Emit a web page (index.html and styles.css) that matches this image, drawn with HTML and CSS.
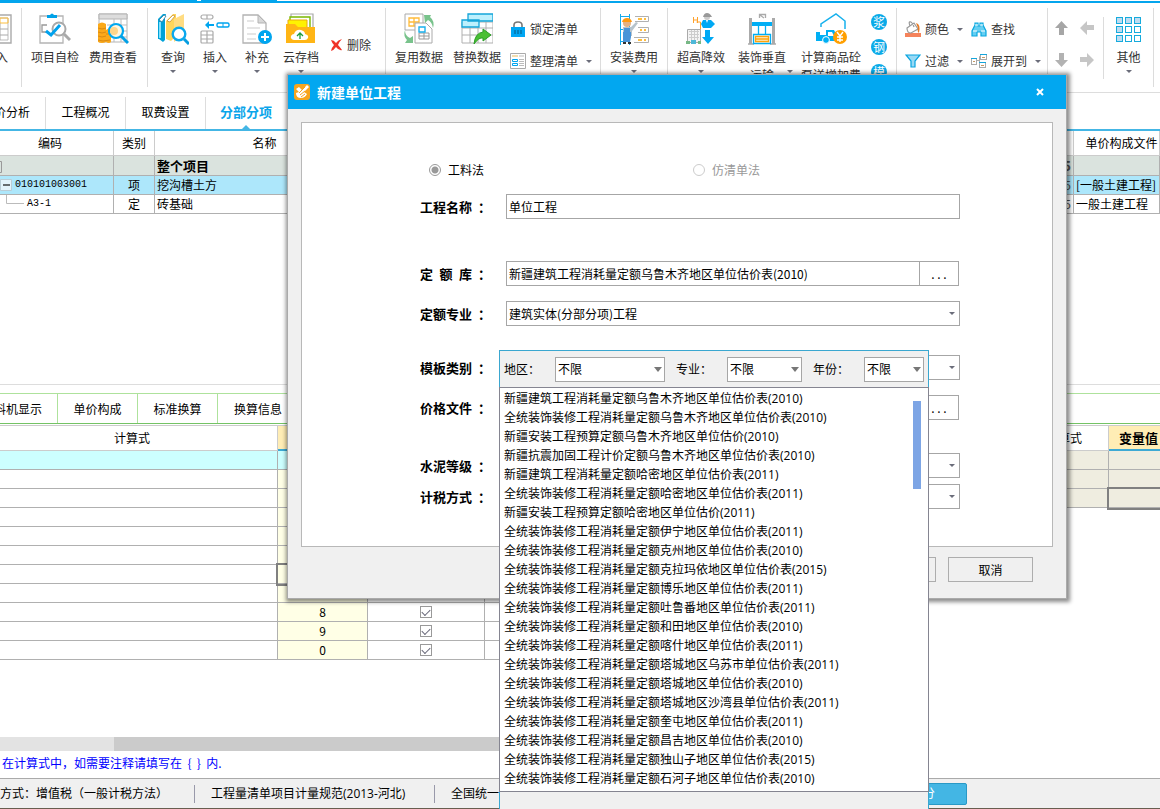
FILE: index.html
```html
<!DOCTYPE html>
<html lang="zh-CN">
<head>
<meta charset="utf-8">
<title>新建单位工程</title>
<link rel="stylesheet" href="styles.css">
</head>
<body>
<div class="app">
  <div class="topbar"><span class="topbar-left"></span><span class="topbar-notch"></span><span class="topbar-mid"></span></div>
  <header class="ribbon">
    <div class="group g-import">
      <button class="tool"><svg width="32" height="32" viewBox="0 0 32 32"><path d="M2 2h29v28H2z" fill="#fff" stroke="#aaa" stroke-width="1.4"/><path d="M5 5h23v22H5z" fill="#fff" stroke="#bbb"/><path d="M5 5h23v5H5zM20 5v5" fill="none" stroke="#fdbe3c"/><path d="M5 16h23M5 22h23M12 10v17M20 10v17" stroke="#aaa"/></svg><span>导入</span></button>
    </div>
    <div class="group g-check">
      <button class="tool"><svg width="32" height="32" viewBox="0 0 32 32"><path d="M1 3h23v27H1z" fill="#fff" stroke="#b4b4b4" stroke-width="1.3"/><path d="M8 2h3q2-3 4 0h3v3H8z" fill="#00a2e8"/><path d="M8 12H3v7h5" fill="none" stroke="#999" stroke-width="1.3"/><circle cx="20" cy="16" r="6.5" fill="#fff" stroke="#a9a9a9" stroke-width="2"/><path d="M25 21l6 6" stroke="#a9a9a9" stroke-width="3"/><path d="M7 18l5 4 9-10" fill="none" stroke="#00a2ee" stroke-width="3"/></svg><span>项目自检</span></button>
      <button class="tool"><svg width="32" height="32" viewBox="0 0 32 32"><path d="M2 1h28v28H2z" fill="#fff" stroke="#b4b4b4"/><path d="M2 1h28v5H2z" fill="#ddd" stroke="#b4b4b4"/><path d="M10 12h20M10 18h20M10 24h20M17 6v23M24 6v23" stroke="#bbb"/><path d="M1 11q4-3 8 0v18q-4 2-8 0zM9 17q4-3 5 0v12q-2 2-5 0z" fill="#fba919"/><path d="M1 15q4 2 8 0M1 19q4 2 8 0M1 23q4 2 8 0M1 27q4 2 12 0M9 21h5" fill="none" stroke="#d98a14"/><circle cx="19" cy="18" r="7" fill="#fff6df" stroke="#00a8f0" stroke-width="2.2"/><circle cx="17" cy="18" r="4" fill="#ffd68a"/><path d="M24 23l7 7" stroke="#00a0e6" stroke-width="3"/></svg><span>费用查看</span></button>
    </div>
    <div class="group g-query">
      <button class="tool"><svg width="32" height="32" viewBox="0 0 32 32"><path d="M1 6l5-5h3L8 4v23l-2 2-4-3H1z" fill="#00a2d8"/><path d="M2 7l5-5 2 1-4 6z" fill="#fff" stroke="#2b7fa0" stroke-width=".8"/><path d="M3 9v16" stroke="#7fe0ff" stroke-width="2"/><path d="M9 8l7-7h3v22l-5 5-5-2z" fill="#ffd65a"/><path d="M10 8l6-6 2 1-5 6z" fill="#fff" stroke="#c9912e" stroke-width=".8"/><path d="M17 6l10-5v21l-10 7z" fill="#ffdc82"/><circle cx="22" cy="21" r="6.3" fill="#fff" stroke="#0aa8ed" stroke-width="2.4"/><path d="M27 26l5 5" stroke="#079ee0" stroke-width="3"/></svg><span>查询</span><i class="arrow"></i></button>
      <button class="tool"><svg width="32" height="32" viewBox="0 0 32 32"><g fill="#fff" stroke="#aaa" stroke-width="1.2"><rect x="2" y="2" width="12" height="4" rx="2"/><rect x="2" y="18" width="12" height="12" rx="1"/><path d="M8 2v4M8 18v12M2 22h12M2 26h12"/></g><path d="M6 12l4-4v3h5v2h-5v3z" fill="#00a5ef"/><rect x="18" y="10" width="12" height="4" rx="1.5" fill="#fff" stroke="#00a5ef" stroke-width="1.4"/><path d="M24 10v4" stroke="#00a5ef"/></svg><span>插入</span><i class="arrow"></i></button>
      <button class="tool"><svg width="32" height="32" viewBox="0 0 32 32"><path d="M2 2h15l8 8v20H2z" fill="#fff" stroke="#b3b3b3" stroke-width="1.3"/><path d="M17 2v8h8z" fill="#d8d8d8" stroke="#b3b3b3"/><path d="M6 8h7M6 15h13M6 21h9M6 26h9" stroke="#ddd" stroke-width="1.5"/><circle cx="24" cy="24" r="7" fill="#00a5ef"/><path d="M24 20v8M20 24h8" stroke="#fff" stroke-width="2"/></svg><span>补充</span><i class="arrow"></i></button>
      <button class="tool wide"><svg width="32" height="32" viewBox="0 0 32 32"><path d="M6 1h22v18H6z" fill="#fff" stroke="#aaa" stroke-width="1.2"/><path d="M5 4h20v14H5z" fill="#fff" stroke="#7ab800" stroke-width="1.4"/><path d="M3 7h19v10H3z" fill="#fff200" stroke="#e9a90e"/><path d="M1 11h9l3 3h17v16H1z" fill="#ffb515"/><path d="M9 27q-4-1-3-4 1-2 3-2 2-5 7-4 4 1 4 4 4 1 3 4-1 2-3 2z" fill="#fff"/><path d="M15 26v-5m-3 2l3-3 3 3" fill="none" stroke="#1c9b3c" stroke-width="1.3"/></svg><span>云存档</span><i class="arrow"></i></button>
      <button class="mini"><svg width="13" height="13" viewBox="0 0 13 13"><path d="M1 1q3 0 5 3 2-3 6-4-3 3-4 6 2 2 4 5-3 1-6-3-2 3-5 4 1-4 3-6-2-2-3-5z" fill="#ef3327"/></svg><span>删除</span></button>
    </div>
    <div class="group g-reuse">
      <button class="tool"><svg width="32" height="32" viewBox="0 0 32 32"><path d="M2 1h18v16H2z" fill="#fff" stroke="#aaa"/><path d="M6 5h10v8H6zM6 9h10M11 5v8" fill="none" stroke="#ffbc3b" stroke-width="1.3"/><path d="M12 10h11l6 6v14H12z" fill="#fff" stroke="#aaa"/><path d="M16 20h10v6H16zM16 23h10M21 20v6" fill="none" stroke="#999"/><path d="M16 14h6v5h-6z" fill="#fff" stroke="#19b0ed" stroke-width="1.4"/><path d="M21 2l7 0-1 2q5 4 3 11-1-6-5-8l-3 3zM2 17q0 6 5 8l3-2v7H2l2-3q-4-4-2-10z" fill="#79c38c"/></svg><span>复用数据</span></button>
      <button class="tool"><svg width="32" height="32" viewBox="0 0 32 32"><path d="M1 9h31v21H1zM1 15h31M1 22h31M9 9v21M17 9v21M25 9v21" fill="#fff" stroke="#b0b0b0"/><path d="M7 1h25v7H7zM1 7h17v7H1z" fill="#bdf0fd" stroke="#15a5d9" stroke-width="1.3"/><path d="M13 31q1-11 9-12v-3l8 6-8 6v-3q-4-1-9 6z" fill="#4abf34" stroke="#2d9f29"/></svg><span>替换数据</span></button>
      <div class="stack">
        <button class="mini"><svg width="16" height="16" viewBox="0 0 16 16"><path d="M4 7V4q0-3 4-3t4 3v3" fill="none" stroke="#777" stroke-width="1.6"/><path d="M1 6h14v10H1z" fill="#00a6f3"/><path d="M4 10h2m1 0h2m1 0h2M4 12h2m1 0h2m1 0h2" stroke="#075a83"/></svg><span>锁定清单</span></button>
        <button class="mini"><svg width="16" height="16" viewBox="0 0 16 16"><path d="M.5.5h15v15H.5z" fill="#fff" stroke="#aaa"/><path d="M2 2h6v2H2z" fill="#f3ddae"/><path d="M9 2h5v2H9z" fill="#ddd"/><path d="M2.500 6.500h5v2h-5zM2.500 10.500h5v2h-5z" fill="#fff" stroke="#00a5ef"/><path d="M9 6.500h5M9 8.500h5M9 10.500h5M9 12.500h5" stroke="#bbb"/></svg><span>整理清单</span><i class="arrow"></i></button>
      </div>
    </div>
    <div class="group g-install">
      <button class="tool"><svg width="32" height="32" viewBox="0 0 32 32"><path d="M2.500 1v31M11.500 1v31M2 3.500h9M2 16.500h5M2 28.500h9" stroke="#15abed"/><path d="M17 3.500h13.500v5H17M20 14.500h10.500v5H20M16 24.500h14.500v5H16" fill="#fff" stroke="#b1b1b1"/><path d="M20 6h4m2 0h2M22 17h2m2 0h2M20 27h4m2 0h2" stroke="#ffa900" stroke-width="1.400"/><circle cx="9" cy="10" r="4" fill="#e3b184"/><path d="M4 9q1-4 5-4t5 4z" fill="#ff9a10"/><path d="M5 14h8l5-5 2 1-6 8v5H5z" fill="#b6c3cc"/><path d="M6 15h6v8h-1v6H8v-6l-2-1zM5 19h8v5l-1 5H9v-4l-1 4H5z" fill="#4a94d8"/><path d="M5 29h3v2H5zm5 0h3v2h-3z" fill="#333"/></svg><span>安装费用</span><i class="arrow"></i></button>
    </div>
    <div class="group g-price">
      <button class="tool"><svg width="32" height="32" viewBox="0 0 32 32"><path d="M8.500 4v6m0-3h4m0-3v6m-1-1h4v21" fill="none" stroke="#ffa12b"/><path d="M2.500 16.500h13v13h-13z" fill="#f4f4f4" stroke="#aaa"/><path d="M4 18.500h10M4 21.500h10M4 24.500h10M6.500 17v10M9.500 17v10M12.500 17v10" stroke="#ccc"/><path d="M1 28h4v3H1zm12 0h3v3h-3z" fill="#77b885"/><path d="M6 27h5v4H6z" fill="#4db8d8"/><path d="M18 4q1-4 4-4t5 4z" fill="#999"/><path d="M19 4h6q0 3-3 3t-3-3z" fill="#ccc"/><path d="M18 7h3l1 3 1-3h3l4 4-4 4H18l-2-4zM20 17h5v7h4l-6 7-6-7h3z" fill="#00a9f4"/></svg><span>超高降效</span><i class="arrow"></i></button>
      <button class="tool t64"><svg width="32" height="32" viewBox="0 0 32 32"><path d="M4.500 5v26M27.500 5v26" stroke="#aaa" stroke-width="3"/><path d="M2 31h6m16 0h6M13.500 5V1.500h6V5M14 2l4 3" fill="none" stroke="#aaa" stroke-width="1.300"/><path d="M6 9h20v4H6z" fill="#00aef5"/><path d="M12.500 12v9m7-9v9M7.500 21.500h17v9h-17z" fill="none" stroke="#00aef5" stroke-width="1.300"/><path d="M9.500 23.500h13v5h-13zM10 26h12" fill="#fff3d7" stroke="#ffa40c" stroke-width="1.400"/></svg><span>装饰垂直<br>运输</span><i class="arrow side"></i></button>
      <button class="tool t74"><svg width="32" height="32" viewBox="0 0 32 32"><path d="M6 14v-3L21 1l9 7v8" fill="none" stroke="#17b1ed" stroke-width="1.500"/><path d="M1 19h4v3h6v-5h8l3 6v5H1z" fill="#00aff4"/><path d="M13 19h4l2 4h-6z" fill="#fff"/><circle cx="11" cy="27" r="3.400" fill="#00aff4" stroke="#fff"/><circle cx="25" cy="24" r="7" fill="#ff9f00"/><path d="M22 19l3 4 3-4M25 23v6M22 24h6M22 27h6" fill="none" stroke="#fff" stroke-width="1.400"/></svg><span>计算商品砼<br>泵送增加费</span></button>
      <div class="rounds"><button>浆</button><button>钢</button><button>模</button></div>
    </div>
    <div class="group g-edit">
      <div class="stack">
        <button class="mini"><svg width="16" height="16" viewBox="0 0 16 16"><path d="M0 12h16v4H0z" fill="#f5835b"/><path d="M2 7l7-5 4 6-7 4q-4 0-4-5zM5 5q-2-5 1-4 2 1 3 5" fill="#fff" stroke="#999" stroke-width="1.200"/><path d="M11 2q5 1 3 10-2-1-1-5z" fill="#e77a25"/></svg><span>颜色</span><i class="arrow"></i></button>
        <button class="mini"><svg width="16" height="16" viewBox="0 0 16 16"><path d="M1 2h14L10 8v6H6V8z" fill="#98d9f5" stroke="#07a4df" stroke-width="1.200"/></svg><span>过滤</span><i class="arrow"></i></button>
      </div>
      <div class="stack find">
        <button class="mini"><svg width="16" height="16" viewBox="0 0 16 16"><path d="M1 15v-5l3-6V2h3v3h2V2h3v2l3 6v5h-5v-4H6v4z" fill="#65cff2" stroke="#0aa8df" stroke-width="1.200"/><path d="M4 4h3m2 0h3M2 10h4m4 0h4" stroke="#fff"/></svg><span>查找</span></button>
        <button class="mini"><svg width="16" height="16" viewBox="0 0 16 16"><path d="M5 7.500h3.500m1-4h-1v8h1" stroke="#aaa" fill="none"/><g fill="#fff" stroke="#aaa"><rect x=".5" y="5.500" width="5" height="6"/><rect x="9.500" y="1.500" width="6" height="5"/><rect x="8.500" y="9.500" width="6" height="5"/></g><path d="M0 5.500h6M9 1.500h7M8 9.500h7" stroke="#14a6dc"/><path d="M2 8.500h2m7-4h3m-4 8h3" stroke="#c79a65"/></svg><span>展开到</span><i class="arrow"></i></button>
      </div>
    </div>
    <div class="group g-move">
      <button aria-label="上移"><svg width="15" height="16" viewBox="0 0 15 16"><path d="M7.500 1L14 8h-4v7H5V8H1z" fill="#a6a6a6"/></svg></button>
      <button aria-label="左移"><svg width="16" height="16" viewBox="0 0 16 16"><path d="M1 8L8 1v4h7v5H8v5z" fill="#c6c6c6"/></svg></button>
      <button aria-label="下移"><svg width="15" height="16" viewBox="0 0 15 16"><path d="M7.500 15L1 8h4V1h5v7h4z" fill="#b2b2b2"/></svg></button>
      <button aria-label="右移"><svg width="16" height="16" viewBox="0 0 16 16"><path d="M15 8L8 1v4H1v5h7v5z" fill="#c6c6c6"/></svg></button>
    </div>
    <div class="group g-other">
      <button class="tool"><svg width="32" height="32" viewBox="0 0 32 32"><g fill="#fff" stroke="#16abdd"><rect x="3.500" y="4.500" width="6" height="6" fill="#bfdcf1"/><rect x="12.500" y="4.500" width="6" height="6" fill="#bfdcf1"/><rect x="21.500" y="4.500" width="6" height="6" fill="#bfdcf1"/><rect x="3.500" y="13.500" width="6" height="6" fill="#bfdcf1"/><rect x="12.500" y="13.500" width="6" height="6"/><rect x="21.500" y="13.500" width="6" height="6"/><rect x="3.500" y="22.500" width="6" height="6" fill="#bfdcf1"/><rect x="12.500" y="22.500" width="6" height="6"/><rect x="21.500" y="22.500" width="6" height="6"/></g></svg><span>其他</span><i class="arrow"></i></button>
    </div>
  </header>

  <nav class="tabs">
    <a href="#" class="first">单价分析</a><a href="#">工程概况</a><a href="#">取费设置</a><a href="#" class="active">分部分项</a>
  </nav>

  <section class="project">
    <table class="grid">
      <colgroup><col class="c-code"><col class="c-kind"><col class="c-name"><col><col class="c-file"></colgroup>
      <thead><tr><th class="shift">编码</th><th>类别</th><th>名称</th><th></th><th class="file">单价构成文件</th></tr></thead>
      <tbody>
        <tr class="root"><td class="tree"><div><svg width="12" height="18"><path d="M0 4.500h1.500v11H0" fill="none" stroke="#999"/></svg></div></td><td></td><td>整个项目</td><td class="num">5</td><td></td></tr>
        <tr class="current"><td class="tree"><div><svg width="12" height="18"><path d="M.5 3.500h11v11H.5z" fill="#e3f3fb" stroke="#b9cdd6"/><path d="M3 9h7" stroke="#222" stroke-width="1.300"/></svg><span class="code">010101003001</span></div></td><td class="mid">项</td><td>挖沟槽土方</td><td class="num">5</td><td>[一般土建工程]</td></tr>
        <tr><td class="tree"><div><svg width="24" height="18"><path d="M6.500 0v8.500H24" fill="none" stroke="#bbb"/></svg><span class="code">A3-1</span></div></td><td class="mid">定</td><td>砖基础</td><td class="num">5</td><td>一般土建工程</td></tr>
      </tbody>
    </table>
  </section>

  <nav class="subtabs">
    <a href="#" class="first">工料机显示</a><a href="#">单价构成</a><a href="#">标准换算</a><a href="#">换算信息</a>
  </nav>

  <section class="lower">
    <div class="calc">
      <table class="grid calc-table">
        <colgroup><col class="c-expr"><col class="c-no"><col class="c-use"><col></colgroup>
        <thead><tr><th class="shift">计算式</th><th class="hot"></th><th></th><th></th></tr></thead>
        <tbody>
          <tr class="first-row"><td></td><td></td><td></td><td></td></tr>
          <tr><td></td><td></td><td></td><td></td></tr>
          <tr><td></td><td></td><td></td><td></td></tr>
          <tr><td></td><td></td><td></td><td></td></tr>
          <tr><td></td><td></td><td></td><td></td></tr>
          <tr><td></td><td></td><td></td><td></td></tr>
          <tr><td></td><td class="focus"></td><td></td><td></td></tr>
          <tr><td></td><td></td><td></td><td></td></tr>
          <tr><td></td><td>8</td><td><input type="checkbox" aria-label="8" checked></td><td></td></tr>
          <tr><td></td><td>9</td><td><input type="checkbox" aria-label="9" checked></td><td></td></tr>
          <tr><td></td><td>0</td><td><input type="checkbox" aria-label="0" checked></td><td></td></tr>
        </tbody>
      </table>
      <div class="hscroll"><div class="thumb"></div></div>
    </div>
    <div class="vars">
      <table class="grid vars-table">
        <colgroup><col><col class="c-var"></colgroup>
        <thead><tr><th class="formula">计算式</th><th class="hot">变量值</th></tr></thead>
        <tbody><tr><td></td><td></td></tr><tr><td></td><td></td></tr><tr><td></td><td class="focus"></td></tr></tbody>
      </table>
    </div>
  </section>
  <p class="hint">在计算式中，如需要注释请填写在 &nbsp;{ &nbsp;} &nbsp;内.</p>
  <footer class="status">
    <span class="s1">方式：增值税（一般计税方法）</span><span class="s2">工程量清单项目计量规范(2013-河北)</span><span class="s3">全国统一</span>
    <button>云评分</button>
  </footer>
</div>

<div class="dialog" role="dialog" aria-label="新建单位工程">
  <div class="titlebar">
    <svg width="16" height="16" viewBox="0 0 16 16"><rect width="16" height="16" rx="3" fill="#f7a51d"/><path d="M2 5l3-2 3 3 5-5 2 2-5 5 3 2q-2 4-6 4-5 0-5-5l3-1z" fill="#fff"/><path d="M5 9l6-6M6 11l5-4M7 13l4-3" stroke="#f7a51d"/></svg>
    <h1>新建单位工程</h1>
    <button aria-label="关闭"><svg width="8" height="8" viewBox="0 0 8 8"><path d="M1 1l6 6M7 1L1 7" stroke="#fff" stroke-width="2"/></svg></button>
  </div>
  <form class="panel">
    <div class="radios">
      <label><input type="radio" name="method" checked>工料法</label>
      <label class="off"><input type="radio" name="method" disabled>仿清单法</label>
    </div>
    <div class="row"><label for="f1"><span>工程名称</span>：</label><input id="f1" type="text" value="单位工程"></div>
    <div class="row gap-l"><label for="f2"><span>定 额 库</span>：</label><div class="pick"><input id="f2" type="text" value="新疆建筑工程消耗量定额乌鲁木齐地区单位估价表(2010)"><button type="button">. . .</button></div></div>
    <div class="row gap-s"><label for="f3"><span>定额专业</span>：</label><div class="combo"><select id="f3"><option>建筑实体(分部分项)工程</option></select></div></div>
    <div class="row gap-m"><label for="f4"><span>模板类别</span>：</label><div class="combo"><select id="f4"><option></option></select></div></div>
    <div class="row gap-s"><label for="f5"><span>价格文件</span>：</label><div class="pick"><input id="f5" type="text"><button type="button">. . .</button></div></div>
    <div class="row gap-n"><label for="f6"><span>水泥等级</span>：</label><div class="combo"><select id="f6"><option></option></select></div></div>
    <div class="row gap-t"><label for="f7"><span>计税方式</span>：</label><div class="combo"><select id="f7"><option></option></select></div></div>
  </form>
  <div class="actions"><button>确定</button><button>取消</button></div>
</div>

<div class="popup">
  <div class="filters">
    <label for="p1">地区：</label><div class="combo w-l"><select id="p1"><option>不限</option></select></div>
    <label for="p2">专业：</label><div class="combo w-m"><select id="p2"><option>不限</option></select></div>
    <label for="p3">年份：</label><div class="combo w-s"><select id="p3"><option>不限</option></select></div>
  </div>
  <div class="list">
    <ul>
      <li>新疆建筑工程消耗量定额乌鲁木齐地区单位估价表(2010)</li>
      <li>全统装饰装修工程消耗量定额乌鲁木齐地区单位估价表(2010)</li>
      <li>新疆安装工程预算定额乌鲁木齐地区单位估价(2010)</li>
      <li>新疆抗震加固工程计价定额乌鲁木齐地区单位估价表(2010)</li>
      <li>新疆建筑工程消耗量定额哈密地区单位估价表(2011)</li>
      <li>全统装饰装修工程消耗量定额哈密地区单位估价表(2011)</li>
      <li>新疆安装工程预算定额哈密地区单位估价(2011)</li>
      <li>全统装饰装修工程消耗量定额伊宁地区单位估价表(2011)</li>
      <li>全统装饰装修工程消耗量定额克州地区单位估价表(2010)</li>
      <li>全统装饰装修工程消耗量定额克拉玛依地区单位估价表(2015)</li>
      <li>全统装饰装修工程消耗量定额博乐地区单位估价表(2011)</li>
      <li>全统装饰装修工程消耗量定额吐鲁番地区单位估价表(2011)</li>
      <li>全统装饰装修工程消耗量定额和田地区单位估价表(2010)</li>
      <li>全统装饰装修工程消耗量定额喀什地区单位估价表(2011)</li>
      <li>全统装饰装修工程消耗量定额塔城地区乌苏市单位估价表(2011)</li>
      <li>全统装饰装修工程消耗量定额塔城地区单位估价表(2010)</li>
      <li>全统装饰装修工程消耗量定额塔城地区沙湾县单位估价表(2011)</li>
      <li>全统装饰装修工程消耗量定额奎屯地区单位估价表(2011)</li>
      <li>全统装饰装修工程消耗量定额昌吉地区单位估价表(2010)</li>
      <li>全统装饰装修工程消耗量定额独山子地区单位估价表(2015)</li>
      <li>全统装饰装修工程消耗量定额石河子地区单位估价表(2010)</li>
    </ul>
    <div class="vscroll"></div>
  </div>
  <div class="popup-foot"></div>
</div>
</body>
</html>
```
FILE: styles.css
```css
* { box-sizing: border-box; }
html, body { height: 100%; }
body {
  margin: 0;
  position: relative;
  overflow: hidden;
  background: #fff;
  color: #000;
  font: 12px/18px "Noto Sans CJK SC", sans-serif;
}
button, input, select { font: inherit; color: inherit; margin: 0; }
button { padding: 0; border: 0; background: none; }
a { color: inherit; text-decoration: none; }
svg { display: block; flex: none; }
.app { height: 100%; display: flex; flex-direction: column; }

/* ribbon */
.topbar { flex: none; height: 3px; display: flex; background: #fff; border-bottom: 2px solid #04a5ed; }
.topbar-left { width: 197px; background: #04a5ed; }
.topbar-notch { width: 4px; }
.topbar-mid { width: 76px; background: #04a5ed; }
.ribbon { flex: none; height: 90px; display: flex; padding: 5px 0; border-bottom: 1px solid #ddd; color: #333; }
.group { flex: none; display: flex; align-items: flex-start; padding: 5px 0 0 4px; border-right: 1px solid #dcdcdc; }
.tool { width: 58px; display: flex; flex-direction: column; align-items: center; position: relative; white-space: nowrap; }
.tool span { margin-top: 3px; }
.arrow { width: 0; height: 0; border: 3px solid transparent; border-top-color: #6b6d7a; border-bottom: 0; }
.tool .arrow { margin-top: 4px; }
.tool .arrow.side { position: absolute; right: 1px; top: 53px; }
.g-import { width: 22px; overflow: hidden; }
.g-import .tool { flex: none; width: 48px; margin-left: -32px; }
.g-check { width: 126px; }
.g-query { width: 238px; }
.g-query .tool { width: 42px; }
.g-query .tool.wide { width: 46px; }
.g-query .mini { margin: 23px 0 0 6px; }
.g-reuse { width: 215px; }
.g-install { width: 67px; }
.g-price { width: 229px; }
.tool.t64 { width: 64px; }
.tool.t74 { width: 74px; }
.g-edit { width: 151px; }
.g-other { width: 50px; padding-left: 0; }
.g-other .tool { width: 49px; }
.mini { height: 18px; display: flex; align-items: center; gap: 4px; white-space: nowrap; }
.mini .arrow { margin-left: 4px; }
.stack { display: flex; flex-direction: column; gap: 14px; padding: 7px 0 0 4px; }
.stack.find { padding-left: 8px; }
.rounds { display: flex; flex-direction: column; gap: 9px; padding: 1px 0 0 3px; }
.rounds button { width: 16px; height: 16px; border-radius: 8px; background: #0aaae8; color: #fff; line-height: 16px; text-align: center; }
.g-move { width: 56px; margin: 9px 0 8px; padding: 3px 4px 0 6px; display: grid; grid-template-columns: 17px 17px; gap: 16px 8px; align-content: start; }

/* main tabs */
.tabs { flex: none; height: 38px; display: flex; padding-top: 4px; border-bottom: 2px solid #44b6e5; }
.tabs a { width: 80px; border-right: 1px solid #ddd; line-height: 30px; text-align: center; white-space: nowrap; }
.tabs .first, .subtabs .first { display: flex; justify-content: flex-end; padding-right: 15px; overflow: hidden; }
.tabs .first { width: 46px; }
.tabs .active { position: relative; border: 0; color: #0aa5ea; font-weight: bold; font-size: 13px; }
.tabs .active::after { content: ""; position: absolute; bottom: 0; left: 36px; border: 4px solid transparent; border-bottom-color: #44b6e5; border-top: 0; }

/* tables */
.grid { width: 100%; table-layout: fixed; border-collapse: separate; border-spacing: 0; }
.grid th { height: 25px; padding: 0; border: solid #ccc; border-width: 0 1px 1px 0; font-weight: normal; }
.grid td { height: 19px; padding: 0 2px; border: solid #b0b0b0; border-width: 0 1px 1px 0; line-height: 18px; white-space: nowrap; overflow: hidden; }
.project { flex: 1; min-height: 0; border-bottom: 1px solid #ddd; }
.c-code { width: 114px; }
.c-kind { width: 41px; }
.c-name { width: 220px; }
.c-file { width: 86px; }
.grid .shift { padding-right: 13px; }
.grid .file { padding-left: 10px; }
.grid .root td { height: 20px; background: #dae3de; font-weight: bold; font-size: 13px; }
.current td { background: #ade7fb; }
.grid .mid { text-align: center; }
.grid .num { text-align: right; color: #555; }
.grid .tree { padding: 0; }
.tree div { display: flex; height: 18px; gap: 3px; }
.code { font: 10px/18px "Liberation Mono", monospace; }

/* detail tabs */
.subtabs { flex: none; height: 31px; display: flex; margin-top: 8px; border-top: 1px solid #aee29c; border-bottom: 1px solid #74c365; }
.subtabs a { width: 80px; border-right: 1px solid #aee29c; line-height: 30px; text-align: center; white-space: nowrap; }
.subtabs .first { width: 58px; }
.subtabs a:last-child { border: 0; }

/* detail area */
.lower { flex: none; display: flex; margin-top: 1px; border-top: 1px solid #ccc; }
.calc { flex: 1; }
.vars { flex: 1; }
.c-expr { width: 278px; }
.c-no { width: 90px; }
.c-use { width: 117px; }
.calc-table td:not(:first-child) { text-align: center; }
.calc-table td:nth-child(2) { background: #ffffe6; }
.calc-table .first-row td { background: #cff; }
.grid .hot { background: #ffedb5; border-bottom: 2px solid #3da9d4; font-weight: bold; font-size: 13px; }
.grid .focus { box-shadow: 0 0 0 2px #808080; position: relative; }
.calc-table input { appearance: none; width: 12px; height: 12px; border: 1px solid #999; vertical-align: top; margin-top: 3px; }
.calc-table input:checked::after { content: ""; display: block; width: 7px; height: 4px; margin: 2px 0 0 1px; border: solid #667; border-width: 0 0 1px 1px; transform: rotate(-45deg); }
.hscroll { height: 14px; margin-top: 77px; background: #e3e3e3; }
.thumb { height: 14px; margin-left: 114px; background: #cbcbcb; }
.c-var { width: 51px; }
.grid .formula { text-align: right; padding-right: 26px; }
.grid .hot:last-child { padding-left: 8px; }
.grid .hot:last-child, .vars td:last-child { border-right: 0; }
.vars-table td { background: #efede0; }
.hint { flex: none; height: 27px; margin: 0; padding: 3px 2px; color: #00f; }
.status { flex: none; height: 31px; display: flex; align-items: center; border-top: 1px solid #aaa; border-bottom: 1px solid #695e50; background: #f0f0f0; font-family: "Open Sans", "Noto Sans CJK SC", sans-serif; white-space: nowrap; }
.status span { border-right: 1px solid #99a; }
.status .s1 { width: 195px; }
.status .s2 { width: 240px; padding-left: 16px; }
.status .s3 { padding-left: 16px; border: 0; }
.status button { width: 100px; height: 22px; margin: 0 193px 0 auto; border: 1px solid #2999c6; border-radius: 2px; background: #43b6e4; color: #fff; }

/* dialog */
.dialog { position: absolute; left: 288px; right: 94px; top: 75px; background: #f0f0f0; box-shadow: 0 0 0 1px #aaa, 1px 1px 4px 3px rgba(0, 0, 0, .45); }
.titlebar { height: 34px; display: flex; align-items: center; gap: 7px; padding: 0 22px 0 6px; background: #02a7f0; color: #fff; }
.titlebar h1 { margin: 0; font-size: 14px; line-height: 20px; }
.titlebar button { margin-left: auto; }
.panel { margin: 13px 13px 0; padding: 37px 92px 37px 118px; border: 1px solid #b8b8b8; background: #fff; }
.radios { display: flex; height: 20px; margin-bottom: 14px; padding-left: 9px; }
.radios label { width: 264px; display: flex; align-items: center; gap: 7px; }
.radios .off { width: auto; color: #999; }
.radios input { appearance: none; width: 12px; height: 12px; border: 1px solid #999; border-radius: 6px; background: #fff; }
.radios input:checked { background: radial-gradient(circle, #999 3px, #fff 4px); }
.radios input:disabled { border-color: #ccc; }
.row { display: flex; height: 25px; }
.row > label { flex: none; width: 86px; display: flex; gap: 6px; font-weight: bold; font-size: 13px; line-height: 25px; }
.row > label span { width: 52px; text-align-last: justify; }
.row > input, .pick, .row .combo { flex: 1; min-width: 0; }
.gap-l { margin-top: 42px; }
.gap-m { margin-top: 29px; }
.gap-n { margin-top: 33px; }
.gap-s { margin-top: 15px; }
.gap-t { margin-top: 6px; }
input[type="text"], select { height: 25px; padding: 0 2px; border: 1px solid #a6a6a6; border-radius: 0; background: #fff; outline: 0; }
.pick { display: flex; padding-right: 1px; }
.pick input { flex: 1; min-width: 0; border-right: 0; }
.pick button { width: 40px; border: 1px solid #a6a6a6; }
.combo { position: relative; }
.combo select { appearance: none; width: 100%; }
.combo::after { content: ""; position: absolute; right: 5px; top: 11px; border: 3px solid transparent; border-top-color: #6b6d7a; border-bottom: 0; }
.actions { display: flex; justify-content: flex-end; gap: 12px; padding: 10px 33px 16px; }
.actions button { width: 85px; height: 25px; border: 1px solid #adadad; }

/* quota library popup */
.popup { position: absolute; left: 499px; top: 350px; bottom: 0; width: 430px; display: flex; flex-direction: column; background: #f0f0f0; }
.filters { flex: none; height: 37px; display: flex; align-items: center; padding: 0 4px; border: 1px solid #3aa7d0; border-bottom: 0; }
.filters .w-l { width: 110px; margin: 0 11px 0 15px; }
.filters .w-m { width: 75px; margin: 0 11px 0 15px; }
.filters .w-s { width: 60px; margin-left: 15px; }
.filters .combo::after { border-width: 5px 4px 0; right: 3px; top: 10px; border-top-color: #777; }
.list { flex: 1; min-height: 0; display: flex; justify-content: space-between; padding: 1px 7px 0 4px; border: 1px solid #858591; background: #fff; overflow: hidden; }
.list ul { margin: 0; padding: 0; list-style: none; font-family: "Open Sans", "Noto Sans CJK SC", sans-serif; line-height: 19px; white-space: nowrap; }
.vscroll { width: 8px; height: 88px; margin-top: 12px; background: #7da5e5; }
.popup-foot { flex: none; height: 17px; border: solid #3aa7d0; border-width: 0 1px; }
```
